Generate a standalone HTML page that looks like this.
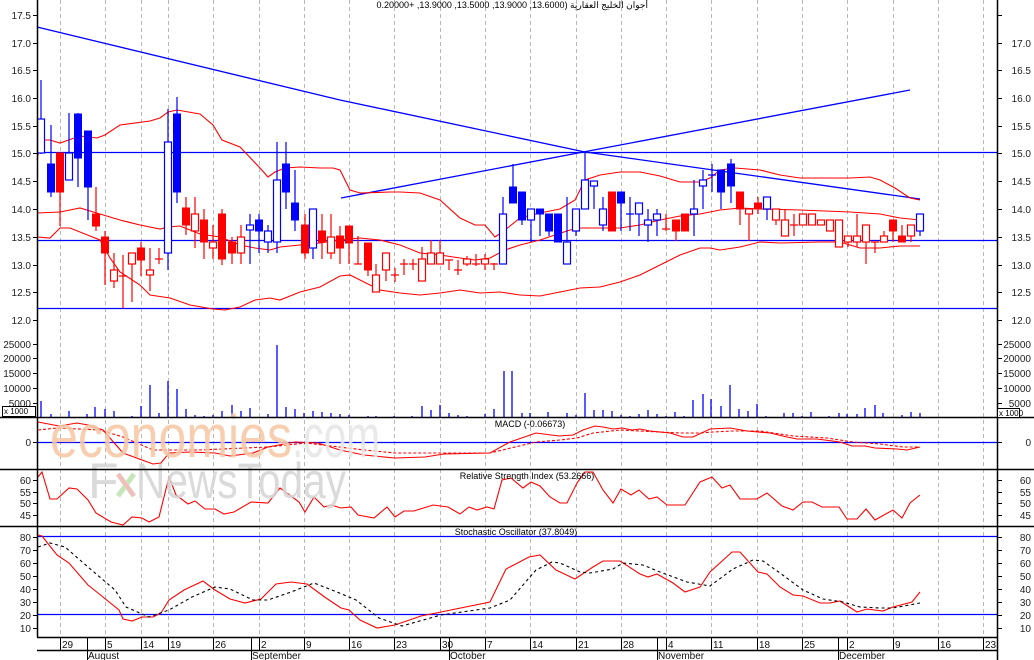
<!DOCTYPE html>
<html><head><meta charset="utf-8"><style>
html,body{margin:0;padding:0;background:#fff;}
#w{position:relative;width:1034px;height:660px;overflow:hidden;font-family:"Liberation Sans",Arial,sans-serif;}
svg{position:absolute;left:0;top:0;}
.t{position:absolute;font-size:9px;color:#000;white-space:nowrap;}
.bf{fill:#0000ff;stroke:#0000ff;stroke-width:1}
.bh{fill:#fff;stroke:#0000ff;stroke-width:1.2}
.rf{fill:#ff0000;stroke:#ff0000;stroke-width:1}
.rh{fill:#fff;stroke:#ff0000;stroke-width:1.2}
.wb{stroke:#0000ff;stroke-width:1.2}
.wr{stroke:#ff0000;stroke-width:1.2}
</style></head><body><div id="w">
<svg width="1034" height="660" viewBox="0 0 1034 660" font-family="Liberation Sans, Arial, sans-serif">
<!-- grid -->
<g stroke="#b8b8b8" stroke-width="1" stroke-dasharray="4,3">
<path d="M60.5 0V637M105.5 0V637M141.5 0V637M168.5 0V637M213.5 0V637M259.5 0V637M304.5 0V637M349.5 0V637M394.5 0V637M440.5 0V637M485.5 0V637M530.5 0V637M576.5 0V637M621.5 0V637M666.5 0V637M711.5 0V637M757.5 0V637M802.5 0V637M847.5 0V637M893.5 0V637M938.5 0V637M983.5 0V637"/>
</g>
<!-- horizontal blue lines main -->
<g stroke="#0000ff" stroke-width="1.3" fill="none">
<path d="M37 152.5H997M37 240.5H997M37 308.5H997"/>
<polyline points="37,27 340,100 585,152 920,199"/>
<polyline points="341,198 910,90"/>
<path d="M37 442.5H997M37 536.5H997M37 614.5H997"/>
</g>
<!-- bollinger -->
<g stroke="#ff0000" stroke-width="1.1" fill="none">
<polyline points="37,160 41,140 50,140 60,143 80,136 97,138 105,135 120,125 150,121 160,118 168,112 177,110 200,114 213,125 222,140 240,147 260,168 268,177 275,172 285,168 300,167 320,168 333,168 340,170 350,190 360,193 390,192 400,192 420,193 440,200 460,218 475,225 485,225 495,237 505,230 520,218 540,213 560,209 575,200 585,180 600,175 620,172 640,172 660,176 680,182 700,182 710,178 720,170 735,168 760,170 780,175 800,178 850,178 870,177 880,180 895,188 910,198 920,200"/>
<polyline points="37,213 60,212 80,208 100,214 120,220 140,225 160,229 168,227 180,226 190,230 200,234 220,237 240,245 255,248 270,250 280,247 300,245 320,243 340,240 360,238 380,240 400,245 420,253 440,255 460,258 475,260 490,258 505,250 520,245 540,240 555,235 570,230 580,228 600,228 620,228 640,225 660,220 680,216 700,214 720,210 740,208 760,209 800,210 850,212 880,214 900,218 920,220"/>
<polyline points="37,237 50,238 60,228 70,228 90,236 100,240 110,258 120,272 140,285 150,295 170,298 190,305 213,309 225,310 240,307 255,300 270,298 280,300 300,292 320,287 340,276 350,275 360,280 380,290 400,293 420,295 440,293 460,290 480,293 500,292 520,295 540,296 560,292 580,288 600,287 620,282 640,275 660,265 680,255 700,248 710,248 720,250 740,247 760,242 780,243 820,242 840,242 860,248 880,248 900,246 920,246"/>
</g>
<!-- candles -->
<g>
<path class="wb" d="M41 80V154M51 125V197M69 113V180M78 113V187M88 131V220M168 109V270M177 97V203M250 214V264M259 214V253M268 225V253M277 142V253M286 142V209M295 170V231M313 209V259M503 197V264M513 164V203M522 192V225M531 209V242M540 209V236M549 214V236M558 214V242M567 197V264M576 209V236M585 152V209M594 181V209M603 197V231M621 192V231M630 197V231M626 214H634M639 203V236M648 209V242M657 209V236M694 180V236M703 170V209M712 164V192M708 175H716M721 170V209M731 159V203M767 197V220M920 214V236"/>
<path class="wr" d="M60 153V226M96 187V231M105 231V285M114 253V288M123 255V308M119 276H127M132 253V302M141 242V276M150 248V291M159 248V264M155 259H163M186 197V235M195 197V248M204 209V259M213 225V259M222 209V265M232 237V264M241 225V264M305 214V259M322 214V259M331 214V259M340 226V264M349 226V264M358 236V264M354 264H362M368 243V276M376 264V292M386 253V281M395 268V282M391 275H399M404 259V275M400 264H408M413 259V270M409 264H417M422 247V281M431 240V264M440 240V264M449 260V270M445 260H453M458 260V275M454 270H462M467 256V266M476 254V266M472 264H480M485 254V270M494 263V270M490 264H498M612 192V231M666 214V231M662 229H670M676 220V241M685 214V231M740 192V225M749 209V241M758 197V214M776 209V225M785 209V236M794 214V236M790 225H798M803 214V225M812 214V225M821 220V225M830 220V231M839 220V247M848 236V247M857 214V247M866 225V264M875 242V253M871 242H879M884 231V242M893 220V242M902 225V242M911 225V242"/>
<rect class="bh" x="37.5" y="119" width="7" height="34"/>
<rect class="bf" x="47.5" y="164" width="7" height="28"/>
<rect class="rf" x="56.5" y="153" width="7" height="39"/>
<rect class="bh" x="65.5" y="153" width="7" height="27"/>
<rect class="bf" x="74.5" y="114" width="7" height="44"/>
<rect class="bf" x="84.5" y="131" width="7" height="56"/>
<rect class="rf" x="92.5" y="214" width="7" height="12"/>
<rect class="rf" x="101.5" y="237" width="7" height="16"/>
<rect class="rh" x="110.5" y="270" width="7" height="11"/>
<rect class="rh" x="128.5" y="253" width="7" height="11"/>
<rect class="rf" x="137.5" y="248" width="7" height="12"/>
<rect class="rh" x="146.5" y="270" width="7" height="5"/>
<rect class="bh" x="164.5" y="142" width="7" height="111"/>
<rect class="bf" x="173.5" y="114" width="7" height="78"/>
<rect class="rf" x="182.5" y="208" width="7" height="17"/>
<rect class="rh" x="191.5" y="214" width="7" height="17"/>
<rect class="rf" x="200.5" y="220" width="7" height="22"/>
<rect class="rh" x="209.5" y="242" width="7" height="6"/>
<rect class="rf" x="218.5" y="214" width="7" height="45"/>
<rect class="rf" x="228.5" y="242" width="7" height="11"/>
<rect class="rh" x="237.5" y="237" width="7" height="16"/>
<rect class="bh" x="246.5" y="225" width="7" height="5"/>
<rect class="bf" x="255.5" y="220" width="7" height="11"/>
<rect class="bh" x="264.5" y="231" width="7" height="11"/>
<rect class="bh" x="273.5" y="180" width="7" height="62"/>
<rect class="bf" x="282.5" y="164" width="7" height="28"/>
<rect class="bf" x="291.5" y="203" width="7" height="17"/>
<rect class="rf" x="301.5" y="225" width="7" height="28"/>
<rect class="bh" x="309.5" y="209" width="7" height="39"/>
<rect class="rf" x="318.5" y="231" width="7" height="11"/>
<rect class="rh" x="327.5" y="237" width="7" height="16"/>
<rect class="rf" x="336.5" y="236" width="7" height="12"/>
<rect class="rf" x="345.5" y="226" width="7" height="17"/>
<rect class="rf" x="364.5" y="243" width="7" height="27"/>
<rect class="rh" x="372.5" y="275" width="7" height="17"/>
<rect class="rh" x="382.5" y="253" width="7" height="17"/>
<rect class="rh" x="418.5" y="259" width="7" height="22"/>
<rect class="rh" x="427.5" y="253" width="7" height="11"/>
<rect class="rh" x="436.5" y="253" width="7" height="11"/>
<rect class="rh" x="463.5" y="259" width="7" height="5"/>
<rect class="rh" x="481.5" y="259" width="7" height="5"/>
<rect class="bh" x="499.5" y="214" width="7" height="50"/>
<rect class="bf" x="509.5" y="187" width="7" height="16"/>
<rect class="bf" x="518.5" y="192" width="7" height="28"/>
<rect class="bh" x="527.5" y="209" width="7" height="11"/>
<rect class="bf" x="536.5" y="209" width="7" height="5"/>
<rect class="bf" x="545.5" y="214" width="7" height="17"/>
<rect class="bf" x="554.5" y="214" width="7" height="28"/>
<rect class="bh" x="563.5" y="242" width="7" height="22"/>
<rect class="bh" x="572.5" y="209" width="7" height="22"/>
<rect class="bh" x="581.5" y="180" width="7" height="29"/>
<rect class="bh" x="590.5" y="181" width="7" height="5"/>
<rect class="bh" x="599.5" y="209" width="7" height="16"/>
<rect class="rf" x="608.5" y="192" width="7" height="39"/>
<rect class="bf" x="617.5" y="192" width="7" height="11"/>
<rect class="bh" x="635.5" y="203" width="7" height="11"/>
<rect class="bh" x="644.5" y="220" width="7" height="5"/>
<rect class="bh" x="653.5" y="214" width="7" height="6"/>
<rect class="rf" x="672.5" y="220" width="7" height="11"/>
<rect class="rf" x="681.5" y="214" width="7" height="17"/>
<rect class="bh" x="690.5" y="209" width="7" height="5"/>
<rect class="bh" x="699.5" y="180" width="7" height="6"/>
<rect class="bf" x="717.5" y="170" width="7" height="22"/>
<rect class="bf" x="727.5" y="164" width="7" height="22"/>
<rect class="rf" x="736.5" y="192" width="7" height="17"/>
<rect class="rh" x="745.5" y="209" width="7" height="5"/>
<rect class="rf" x="754.5" y="203" width="7" height="6"/>
<rect class="bh" x="763.5" y="197" width="7" height="12"/>
<rect class="rh" x="772.5" y="209" width="7" height="11"/>
<rect class="rh" x="781.5" y="220" width="7" height="16"/>
<rect class="rh" x="799.5" y="214" width="7" height="11"/>
<rect class="rh" x="808.5" y="214" width="7" height="11"/>
<rect class="rh" x="817.5" y="220" width="7" height="5"/>
<rect class="rh" x="826.5" y="220" width="7" height="11"/>
<rect class="rh" x="835.5" y="220" width="7" height="27"/>
<rect class="rh" x="844.5" y="236" width="7" height="6"/>
<rect class="rh" x="853.5" y="236" width="7" height="6"/>
<rect class="rh" x="862.5" y="225" width="7" height="17"/>
<rect class="rh" x="880.5" y="236" width="7" height="6"/>
<rect class="rf" x="889.5" y="220" width="7" height="11"/>
<rect class="rf" x="898.5" y="236" width="7" height="6"/>
<rect class="rh" x="907.5" y="225" width="7" height="11"/>
<rect class="bh" x="916.5" y="214" width="7" height="17"/>
</g>
<!-- volume -->
<path stroke="#0000ff" stroke-width="1.3" d="M41 417V401M51 417V414M69 417V411M87 417V414M95 417V407M105 417V409M114 417V411M132 417V416M141 417V406M150 417V385M159 417V413M168 417V381M177 417V389M186 417V409M195 417V415M204 417V416M213 417V415M222 417V411M232 417V405M241 417V411M250 417V408M268 417V414M277 417V345M286 417V407M295 417V409M304 417V413M313 417V411M322 417V412M331 417V413M340 417V414M349 417V415M368 417V416M376 417V416M394 417V416M412 417V416M422 417V406M431 417V410M440 417V405M449 417V413M458 417V415M467 417V416M485 417V414M494 417V409M504 417V371M512 417V371M522 417V413M530 417V413M548 417V412M567 417V413M576 417V415M585 417V393M594 417V410M603 417V410M612 417V411M621 417V415M630 417V416M639 417V414M648 417V410M657 417V414M666 417V416M675 417V412M684 417V416M693 417V400M703 417V394M711 417V399M721 417V406M730 417V385M739 417V409M748 417V411M757 417V404M766 417V416M784 417V413M793 417V413M802 417V416M811 417V412M829 417V416M839 417V413M847 417V414M857 417V414M865 417V408M875 417V405M883 417V413M902 417V415M911 417V412M920 417V413"/>
<!-- MACD -->
<g stroke="#ff0000" stroke-width="1.1" fill="none">
<polyline points="38,422 59,426 77,423 88,425 103,430 123,453 142,460 153,464 161,463 169,453 190,452 215,453 230,456 253,453 268,447 295,442 318,443 340,450 364,455 395,458 425,457 444,454 490,453 510,442 536,433 559,436 573,435 583,430 595,426 603,427 613,429 622,428 632,430 640,429 650,431 670,433 683,437 693,437 710,429 730,428 747,431 770,433 787,437 797,439 817,439 840,442 852,446 865,446 875,448 897,449 907,450 920,447"/>
<polyline stroke-dasharray="3,2" points="38,430 57,428 100,430 123,437 153,450 199,450 268,447 306,443 364,450 395,453 490,453 536,442 560,440 577,438 593,433 620,430 660,432 680,433 700,433 713,432 733,431 760,431 793,436 827,438 853,442 880,444 903,447 920,447"/>
</g>
<!-- RSI -->
<polyline fill="none" stroke="#ff0000" stroke-width="1.1" points="38,477 42,472 50,499 57,499 69,488 77,489 88,500 96,513 111,522 123,525 132,517 142,518 149,522 159,517 169,477 176,495 188,504 195,501 205,509 215,509 224,514 234,512 251,502 268,503 280,488 291,496 299,502 305,512 314,497 324,507 331,505 341,508 351,507 358,515 374,518 387,507 395,517 404,511 414,511 433,505 448,507 460,514 469,507 477,510 487,507 494,509 502,480 511,478 523,488 531,482 540,486 550,497 560,503 567,503 577,483 585,472 593,472 603,490 613,503 621,489 631,495 639,490 649,499 657,497 667,505 685,505 700,482 712,477 722,488 730,485 740,499 757,499 767,493 782,506 793,510 803,502 812,502 822,507 839,507 847,519 857,519 866,509 875,520 893,510 902,518 910,503 920,495"/>
<!-- Stoch -->
<polyline fill="none" stroke="#ff0000" stroke-width="1.1" points="38,535 42,536 57,555 69,563 88,585 103,597 119,610 123,619 132,621 142,617 153,617 161,613 169,600 184,590 203,581 215,590 230,599 245,603 261,599 276,584 291,582 307,584 326,598 341,608 349,610 360,620 377,628 395,625 421,616 441,612 490,602 506,569 529,557 540,555 556,570 575,579 593,567 603,561 620,561 640,574 648,577 657,574 673,583 685,592 700,587 710,572 732,552 740,552 758,572 767,574 780,587 793,595 803,596 820,603 830,603 840,601 857,612 867,609 883,611 893,607 912,602 920,592"/>
<polyline fill="none" stroke="#000" stroke-width="1.1" stroke-dasharray="3,3" points="38,547 50,543 65,547 88,567 115,590 126,607 149,617 169,610 192,597 215,587 230,589 253,600 268,600 291,592 314,583 337,592 356,600 379,618 402,626 441,615 490,608 510,600 536,570 552,562 560,563 580,572 590,573 613,569 623,563 643,565 660,572 687,582 710,586 733,569 753,560 763,561 780,573 803,590 823,599 843,602 860,607 880,608 893,608 920,603"/>
<!-- watermark -->
<g opacity="0.88">
<text x="50" y="457" font-size="60" fill="#f8c8a6" textLength="242" lengthAdjust="spacingAndGlyphs">economies</text>
<text x="292" y="457" font-size="60" fill="#e6e6e6" textLength="88" lengthAdjust="spacingAndGlyphs">.com</text>
<text x="88" y="498" font-size="50" fill="#d6d6d6">F</text>
<path d="M118 474l16 22M134 474l-16 22" stroke="#bfe3b0" stroke-width="5"/>
<path d="M118 474l16 22" stroke="#f2b5b5" stroke-width="4"/>
<text x="136" y="498" font-size="50" fill="#d6d6d6" textLength="210" lengthAdjust="spacingAndGlyphs">NewsToday</text>
</g>
<!-- panel frames -->
<g stroke="#000" stroke-width="1.5" fill="none">
<path d="M37.5 0V637M997.5 0V660M0 417.5H1034M0 469.5H1034M0 526.5H1034M37 637.5H997M37 650.5H997"/>
</g>
<path stroke="#000" stroke-width="1" d="M87.5 637V660M251.5 637V660M449.5 637V660M657.5 637V660M838.5 637V660M60.5 637V650M105.5 637V650M141.5 637V650M168.5 637V650M213.5 637V650M259.5 637V650M304.5 637V650M349.5 637V650M394.5 637V650M440.5 637V650M485.5 637V650M530.5 637V650M576.5 637V650M621.5 637V650M666.5 637V650M711.5 637V650M757.5 637V650M802.5 637V650M847.5 637V650M893.5 637V650M938.5 637V650M983.5 637V650"/>
<!-- ticks -->
<g stroke="#000" stroke-width="1">
<path d="M33 15.5H37M33 43.5H37M33 70.5H37M33 98.5H37M33 126.5H37M33 153.5H37M33 181.5H37M33 209.5H37M33 237.5H37M33 265.5H37M33 292.5H37M33 320.5H37M33 344.5H37M33 358.5H37M33 373.5H37M33 388.5H37M33 403.5H37M33 442.5H37M33 480.5H37M33 492.5H37M33 503.5H37M33 515.5H37M33 537.5H37M33 550.5H37M33 563.5H37M33 576.5H37M33 589.5H37M33 602.5H37M33 615.5H37M33 628.5H37"/>
<path d="M997 15.5H1002M997 43.5H1002M997 70.5H1002M997 98.5H1002M997 126.5H1002M997 153.5H1002M997 181.5H1002M997 209.5H1002M997 237.5H1002M997 265.5H1002M997 292.5H1002M997 320.5H1002M997 344.5H1002M997 358.5H1002M997 373.5H1002M997 388.5H1002M997 403.5H1002M997 442.5H1002M997 480.5H1002M997 492.5H1002M997 503.5H1002M997 515.5H1002M997 537.5H1002M997 550.5H1002M997 563.5H1002M997 576.5H1002M997 589.5H1002M997 602.5H1002M997 615.5H1002M997 628.5H1002"/>
</g>
<!-- axis labels -->
<g font-size="10" fill="#222" text-anchor="end">
<text x="31" y="19">17.5</text><text x="31" y="47">17.0</text><text x="31" y="74">16.5</text><text x="31" y="102">16.0</text><text x="31" y="130">15.5</text><text x="31" y="157">15.0</text><text x="31" y="185">14.5</text><text x="31" y="213">14.0</text><text x="31" y="241">13.5</text><text x="31" y="269">13.0</text><text x="31" y="296">12.5</text><text x="31" y="324">12.0</text>
<text x="31" y="348">25000</text><text x="31" y="362">20000</text><text x="31" y="377">15000</text><text x="31" y="392">10000</text><text x="31" y="407">5000</text>
<text x="31" y="446">0</text>
<text x="31" y="484">60</text><text x="31" y="496">55</text><text x="31" y="507">50</text><text x="31" y="519">45</text>
<text x="31" y="541">80</text><text x="31" y="554">70</text><text x="31" y="567">60</text><text x="31" y="580">50</text><text x="31" y="593">40</text><text x="31" y="606">30</text><text x="31" y="619">20</text><text x="31" y="632">10</text>
</g>
<g font-size="10" fill="#222" text-anchor="end">
<text x="1031" y="47">17.0</text><text x="1031" y="74">16.5</text><text x="1031" y="102">16.0</text><text x="1031" y="130">15.5</text><text x="1031" y="157">15.0</text><text x="1031" y="185">14.5</text><text x="1031" y="213">14.0</text><text x="1031" y="241">13.5</text><text x="1031" y="269">13.0</text><text x="1031" y="296">12.5</text><text x="1031" y="324">12.0</text>
<text x="1031" y="348">25000</text><text x="1031" y="362">20000</text><text x="1031" y="377">15000</text><text x="1031" y="392">10000</text><text x="1031" y="407">5000</text>
<text x="1031" y="446">0</text>
<text x="1031" y="484">60</text><text x="1031" y="496">55</text><text x="1031" y="507">50</text><text x="1031" y="519">45</text>
<text x="1031" y="541">80</text><text x="1031" y="554">70</text><text x="1031" y="567">60</text><text x="1031" y="580">50</text><text x="1031" y="593">40</text><text x="1031" y="606">30</text><text x="1031" y="619">20</text><text x="1031" y="632">10</text>
</g>
<rect x="2.5" y="406.5" width="33" height="10" fill="#fff" stroke="#000"/>
<text x="4" y="414" font-size="8">x 1000</text>
<rect x="997.5" y="408.5" width="22" height="9" fill="#fff" stroke="#000"/>
<text x="999" y="416" font-size="8">x 1000</text>
<g font-size="10" fill="#111">
<text x="62" y="648">29</text><text x="107" y="648">5</text><text x="143" y="648">14</text><text x="170" y="648">19</text><text x="215" y="648">26</text><text x="261" y="648">2</text><text x="306" y="648">9</text><text x="351" y="648">16</text><text x="396" y="648">23</text><text x="442" y="648">30</text><text x="487" y="648">7</text><text x="532" y="648">14</text><text x="578" y="648">21</text><text x="623" y="648">28</text><text x="668" y="648">4</text><text x="713" y="648">11</text><text x="759" y="648">18</text><text x="804" y="648">25</text><text x="849" y="648">2</text><text x="895" y="648">9</text><text x="940" y="648">16</text><text x="985" y="648">23</text>
<text x="88" y="659">August</text><text x="252" y="659">September</text><text x="450" y="659">October</text><text x="658" y="659">November</text><text x="839" y="659">December</text>
</g>
<g font-size="9" fill="#000" text-anchor="middle">
<text x="530" y="427">MACD (-0.06673)</text>
<text x="527" y="479">Relative Strength Index (53.2666)</text>
<text x="516" y="535">Stochastic Oscillator (37.8049)</text>
</g>
</svg>
<div class="t" dir="rtl" style="right:386px;top:0px;font-family:'Liberation Sans','Noto Sans CJK SC',sans-serif;">أجوان الخليج العقارية (13.6000, 13.9000, 13.5000, 13.9000, +0.20000</div>
</div></body></html>
